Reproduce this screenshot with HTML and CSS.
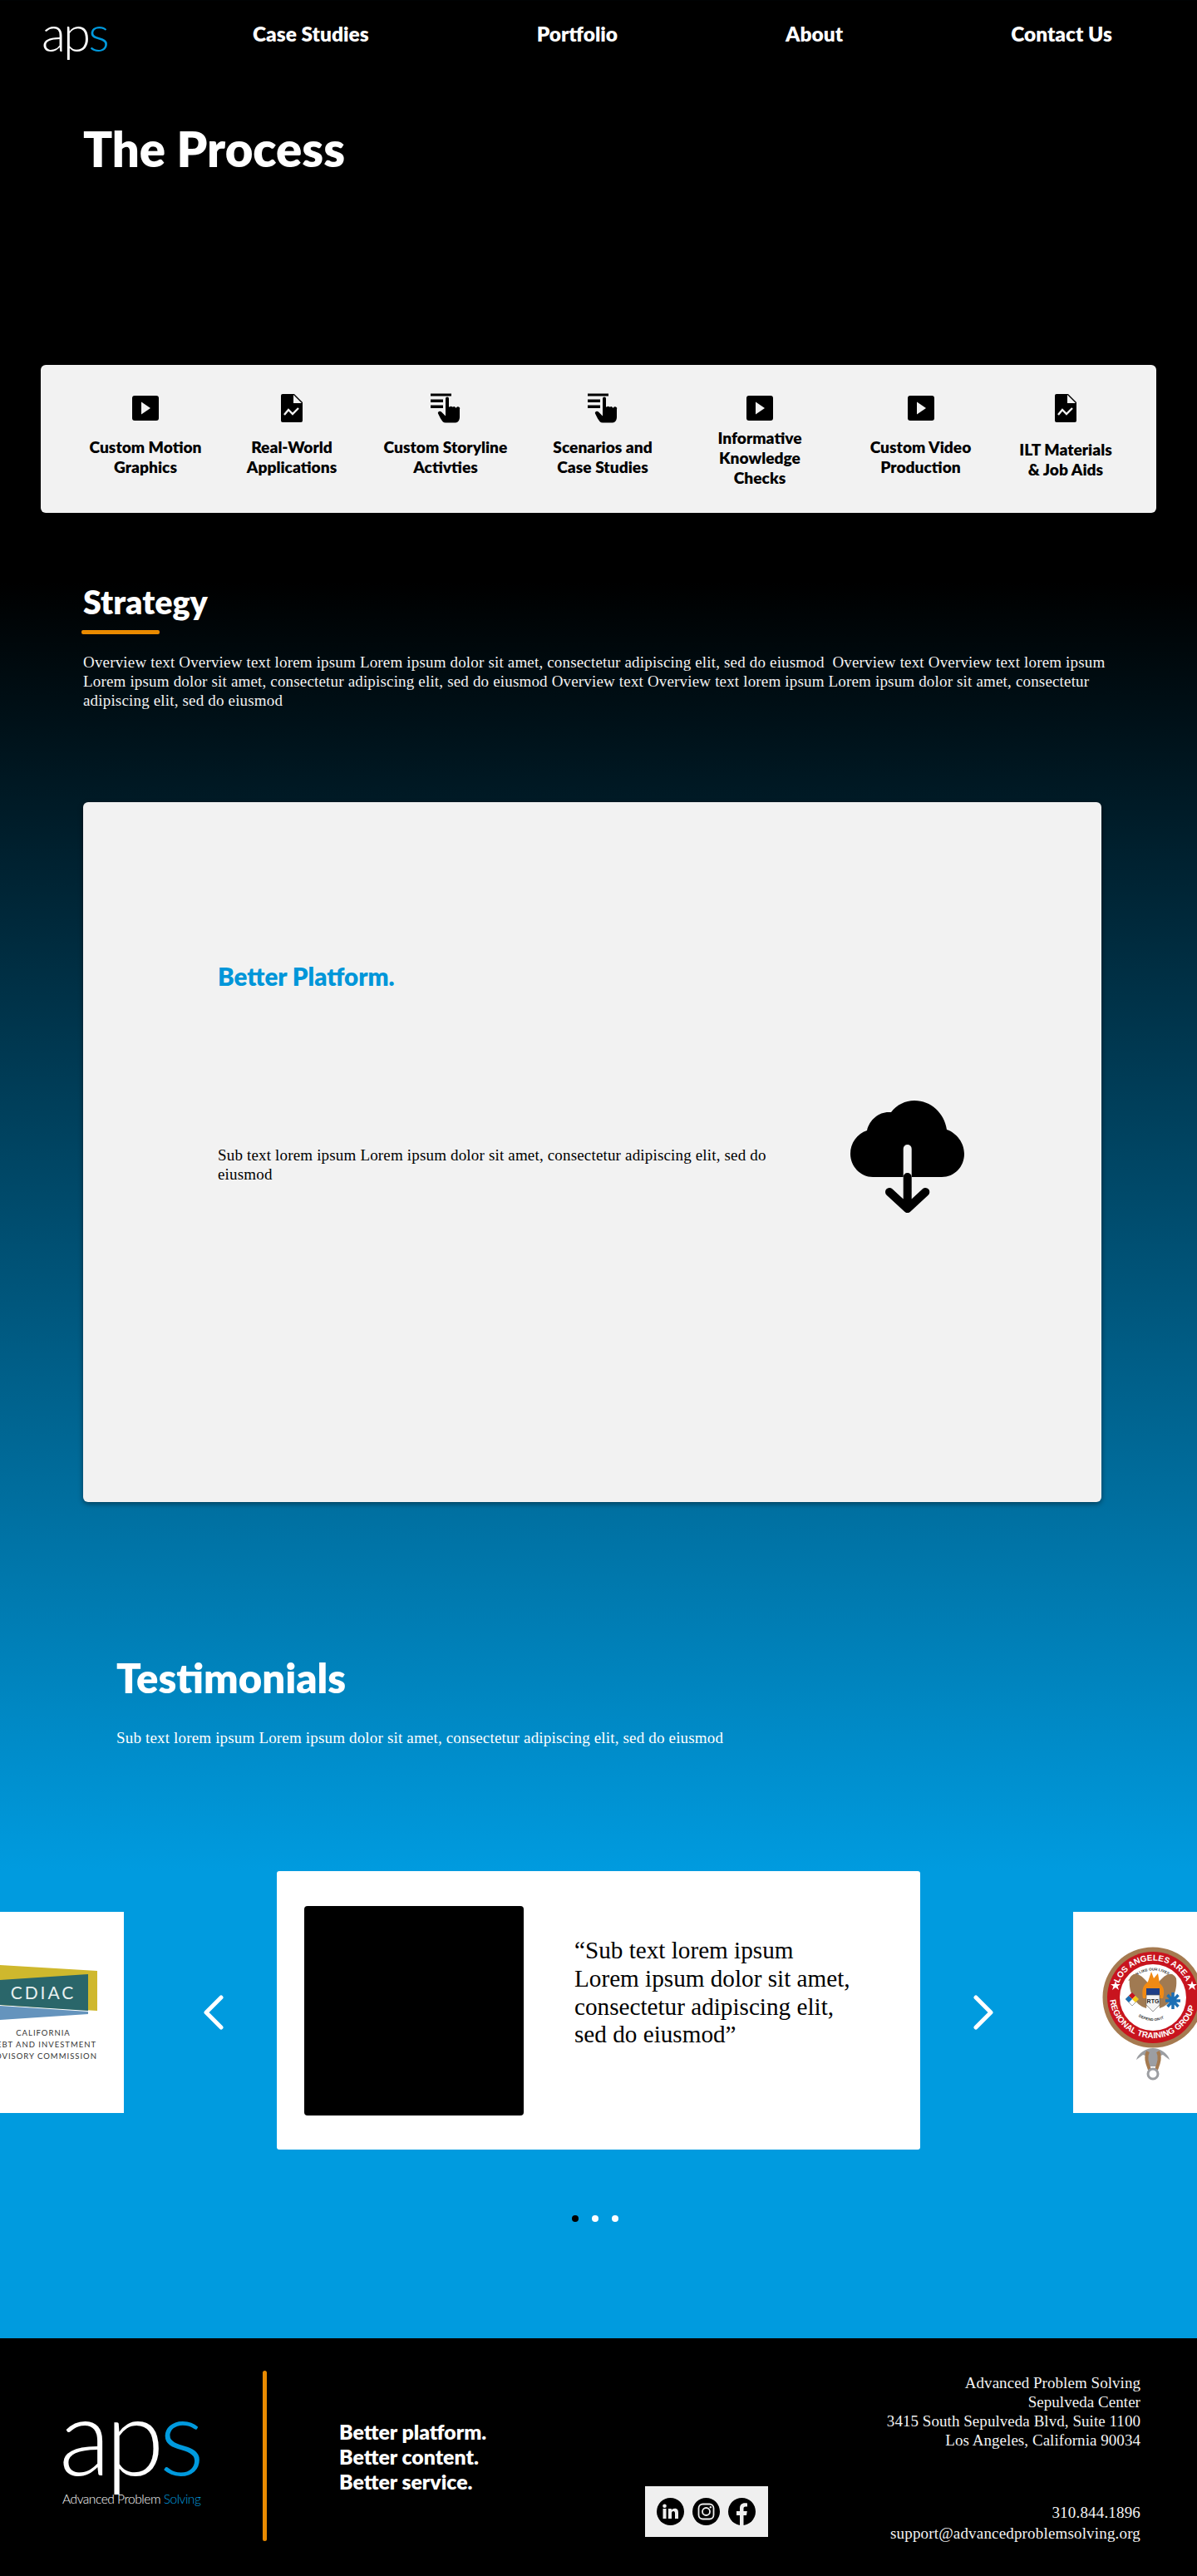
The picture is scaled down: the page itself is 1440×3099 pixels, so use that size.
FILE: index.html
```html
<!DOCTYPE html>
<html lang="en">
<head>
<meta charset="utf-8">
<title>The Process</title>
<link rel="stylesheet" href="styles.css">
</head>
<body>
<header class="nav">
  <a class="logo logo-small" href="#">ap<span class="blue">s</span></a>
  <nav class="nav-links">
    <a href="#">Case Studies</a>
    <a href="#">Portfolio</a>
    <a href="#">About</a>
    <a href="#">Contact Us</a>
  </nav>
</header>
<main>
  <h1 class="page-title">The Process</h1>

  <section class="process">
    <div class="step">
      <svg class="ico" width="32" height="30" viewBox="0 0 32 30"><rect width="32" height="30" rx="3" fill="#000"/><path d="M11 7.5 22 15 11 22.500Z" fill="#f2f2f2"/></svg>
      <p class="step-label">Custom Motion<br>Graphics</p>
    </div>
    <div class="step">
      <svg class="ico" width="26" height="34" viewBox="0 0 26 34"><path d="M2 0H16L26 10V32A2 2 0 0 1 24 34H2A2 2 0 0 1 0 32V2A2 2 0 0 1 2 0Z" fill="#000"/><path d="M15 1V11H25Z" fill="#f2f2f2"/><path d="M4 25 9 19 14 24 21 17" fill="none" stroke="#f2f2f2" stroke-width="2.400"/></svg>
      <p class="step-label">Real-World<br>Applications</p>
    </div>
    <div class="step">
      <svg class="ico" width="36" height="35" viewBox="0 0 36 35"><path d="M0 0H25V3H0ZM0 7H15V10.500H0ZM0 14H15V17.500H0Z" fill="#000"/><path d="M18 6a2 2 0 0 1 4 0V16h1a2 2 0 0 1 3 0h1a2 2 0 0 1 3 1h1a2 2 0 0 1 4 2V28c0 4-2 7-5 7H18c-3 0-4-2-6-5l-3-6c-1-2 2-4 4-2l5 5Z" fill="#000"/></svg>
      <p class="step-label">Custom Storyline<br>Activties</p>
    </div>
    <div class="step">
      <svg class="ico" width="36" height="35" viewBox="0 0 36 35"><path d="M0 0H25V3H0ZM0 7H15V10.500H0ZM0 14H15V17.500H0Z" fill="#000"/><path d="M18 6a2 2 0 0 1 4 0V16h1a2 2 0 0 1 3 0h1a2 2 0 0 1 3 1h1a2 2 0 0 1 4 2V28c0 4-2 7-5 7H18c-3 0-4-2-6-5l-3-6c-1-2 2-4 4-2l5 5Z" fill="#000"/></svg>
      <p class="step-label">Scenarios and<br>Case Studies</p>
    </div>
    <div class="step">
      <svg class="ico" width="32" height="30" viewBox="0 0 32 30"><rect width="32" height="30" rx="3" fill="#000"/><path d="M11 7.500 22 15 11 22.500Z" fill="#f2f2f2"/></svg>
      <p class="step-label step-low">Informative<br>Knowledge<br>Checks</p>
    </div>
    <div class="step">
      <svg class="ico" width="32" height="30" viewBox="0 0 32 30"><rect width="32" height="30" rx="3" fill="#000"/><path d="M11 7.500 22 15 11 22.500Z" fill="#f2f2f2"/></svg>
      <p class="step-label">Custom Video<br>Production</p>
    </div>
    <div class="step">
      <svg class="ico" width="26" height="34" viewBox="0 0 26 34"><path d="M2 0H16L26 10V32A2 2 0 0 1 24 34H2A2 2 0 0 1 0 32V2A2 2 0 0 1 2 0Z" fill="#000"/><path d="M15 1V11H25Z" fill="#f2f2f2"/><path d="M4 25 9 19 14 24 21 17" fill="none" stroke="#f2f2f2" stroke-width="2.400"/></svg>
      <p class="step-label step-lower">ILT Materials<br>&amp; Job Aids</p>
    </div>
  </section>

  <section class="strategy">
    <h2 class="strategy-title">Strategy</h2>
    <div class="rule"></div>
    <p class="overview">Overview text Overview text lorem ipsum Lorem ipsum dolor sit amet, consectetur adipiscing elit, sed do eiusmod&nbsp; Overview text Overview text lorem ipsum Lorem ipsum dolor sit amet, consectetur adipiscing elit, sed do eiusmod Overview text Overview text lorem ipsum Lorem ipsum dolor sit amet, consectetur adipiscing elit, sed do eiusmod</p>
  </section>

  <section class="platform">
    <h3 class="platform-title">Better Platform.</h3>
    <div class="platform-row">
      <p class="platform-text">Sub text lorem ipsum Lorem ipsum dolor sit amet, consectetur adipiscing elit, sed do eiusmod</p>
      <svg class="cloud" width="137" height="135" viewBox="0 0 137 135">
        <path d="M27 92C12 92 0 79 0 64 0 51 8 40 20 36 23 23 34 14 46 14H49C56 5 66 0 77 0 97 0 113 15 116 35 128 39 137 51 137 64 137 80 125 92 110 92Z" fill="#000"/>
        <path d="M68.700 58V92" stroke="#f2f2f2" stroke-width="10" stroke-linecap="round"/>
        <path d="M68.700 92V130M47 110 68.700 130 90.300 110" fill="none" stroke="#000" stroke-width="10" stroke-linecap="round" stroke-linejoin="round"/>
      </svg>
    </div>
  </section>

  <section class="testimonials">
    <h2 class="testimonials-title">Testimonials</h2>
    <p class="testimonials-sub">Sub text lorem ipsum Lorem ipsum dolor sit amet, consectetur adipiscing elit, sed do eiusmod</p>
  </section>

  <section class="carousel">
    <div class="side-card">
      <svg width="149" height="242" viewBox="0 0 149 242">
        <svg x="0" y="0" width="117" height="242" viewBox="0 0 117 242">
          <path d="M0 64 117 71V119L0 112Z" fill="#cfb82d"/>
          <path d="M0 113 106 120V123L0 130Z" fill="#6594bd"/>
          <path d="M0 82 106 75V119L0 112Z" fill="#2a666a"/>
          <text class="cdiac-mark" x="52" y="105" text-anchor="middle">CDIAC</text>
          <text class="cdiac-line" x="52" y="149" text-anchor="middle">CALIFORNIA</text>
          <text class="cdiac-line" x="52" y="163" text-anchor="middle">DEBT AND INVESTMENT</text>
          <text class="cdiac-line" x="52" y="177" text-anchor="middle">ADVISORY COMMISSION</text>
        </svg>
      </svg>
    </div>
    <svg class="arrow arrow-left" width="26" height="42" viewBox="0 0 26 42"><path d="M22 3 4 21 22 39" fill="none" stroke="#fff" stroke-width="5" stroke-linecap="round" stroke-linejoin="round"/></svg>
    <article class="quote-card">
      <div class="quote-photo"></div>
      <p class="quote-text">“Sub text lorem ipsum<br>Lorem ipsum dolor sit amet,<br>consectetur adipiscing elit,<br>sed do eiusmod”</p>
    </article>
    <svg class="arrow arrow-right" width="26" height="42" viewBox="0 0 26 42"><path d="M4 3 22 21 4 39" fill="none" stroke="#fff" stroke-width="5" stroke-linecap="round" stroke-linejoin="round"/></svg>
    <div class="side-card">
      <svg width="149" height="242" viewBox="0 0 149 242">
        <defs>
          <path id="arcTop" d="M54.200 87.800A44.500 44.500 0 0 1 137.800 87.800"/>
          <path id="arcBottom" d="M44 100A52 52 0 1 0 148 100"/>
          <path id="arcInner" d="M68 86A33 33 0 0 1 124 86"/>
          <path id="arcInnerLow" d="M74 122A31 31 0 0 0 118 122"/>
        </defs>
        <circle cx="96" cy="103" r="60.500" fill="#a57a50"/>
        <circle cx="96" cy="103" r="55" fill="#c8141e"/>
        <circle cx="96" cy="103" r="40" fill="#fff"/>
        <text class="seal-text"><textPath href="#arcTop" startOffset="2">LOS ANGELES AREA</textPath></text>
        <text class="seal-text"><textPath href="#arcBottom" startOffset="6">REGIONAL TRAINING GROUP</textPath></text>
        <text class="seal-small"><textPath href="#arcInner" startOffset="2">TRAIN LIKE OUR LIVES</textPath></text>
        <text class="seal-small"><textPath href="#arcInnerLow" startOffset="6">DEPEND ON IT</textPath></text>
        <path d="M51 83 52.500 87H57L53.500 89.500 55 94 51 91 47 94 48.500 89.500 45 87H49.500Z" fill="#fff"/>
        <path d="M143 83 144.500 87H149L145.500 89.500 147 94 143 91 139 94 140.500 89.500 137 87H141.500Z" fill="#fff"/>
        <path d="M92 88C80 72 72 72 68 80 66 96 74 112 88 116ZM100 88C112 72 120 72 124 80 126 96 118 112 104 116Z" fill="#a07a52"/>
        <path d="M84 104C82 90 86 88 90 84L94 72 97 80 102 74 104 86C110 90 110 98 108 104Z" fill="#f08a14"/>
        <path d="M88 92H104V100H88Z" fill="#1f3f86"/>
        <path d="M88 100H104V112L96 120 88 112Z" fill="#f4f4f4" stroke="#555" stroke-width=".6"/>
        <text class="seal-rtg" x="96" y="110" text-anchor="middle">RTG</text>
        <path d="M71 97 79 105 71 113 63 105Z" fill="#fff" stroke="#444" stroke-width=".5"/>
        <path d="M71 97 75 101 71 105 67 101Z" fill="#c8141e"/><path d="M63 105 67 101 71 105 67 109Z" fill="#1b6fb5"/><path d="M75 101 79 105 75 109 71 105Z" fill="#f4c814"/>
        <path d="M120 97V117M111 107H129M113.500 100 126.500 114M126.500 100 113.500 114" stroke="#1b6fb5" stroke-width="3.500"/>
        <path d="M76 178C78 170 88 164 96 164 104 164 114 170 116 178L108 172 102 174V186H90V174L84 172Z" fill="#9c9ea2"/>
        <path d="M90 168C86 176 90 184 92 190M102 168C106 176 102 184 100 190" fill="none" stroke="#a57a50" stroke-width="4"/>
        <circle cx="96" cy="195" r="6" fill="none" stroke="#9c9ea2" stroke-width="3"/>
      </svg>
    </div>
  </section>

  <div class="dots">
    <span class="dot dot-active"></span>
    <span class="dot"></span>
    <span class="dot"></span>
  </div>
</main>

<footer class="footer">
  <div class="brand">
    <div class="logo logo-large">ap<span class="blue">s</span></div>
    <div class="brand-name">Advanced Problem <span class="blue">Solving</span></div>
  </div>
  <div class="footer-rule"></div>
  <p class="tagline">Better platform.<br>Better content.<br>Better service.</p>
  <div class="social">
    <svg width="33" height="33" viewBox="0 0 33 33"><circle cx="16.500" cy="16.500" r="16.500" fill="#000"/><path d="M7.500 13H11.500V25H7.500ZM9.500 7.500A2.300 2.300 0 1 1 9.500 12.100 2.300 2.300 0 0 1 9.500 7.500ZM14 13H17.800V14.700C18.500 13.500 20 12.700 21.800 12.700 25 12.700 26 14.800 26 18V25H22V18.800C22 17.200 21.500 16.100 20.100 16.100 18.700 16.100 18 17.200 18 18.800V25H14Z" fill="#efefef"/></svg>
    <svg width="33" height="33" viewBox="0 0 33 33"><circle cx="16.500" cy="16.500" r="16.500" fill="#000"/><rect x="7.500" y="7.500" width="18" height="18" rx="5" fill="none" stroke="#efefef" stroke-width="1.800"/><circle cx="16.500" cy="16.500" r="4.500" fill="none" stroke="#efefef" stroke-width="1.800"/><circle cx="21.800" cy="11.200" r="1.200" fill="#efefef"/></svg>
    <svg width="33" height="33" viewBox="0 0 33 33"><circle cx="16.500" cy="16.500" r="16.500" fill="#000"/><path d="M14 33V21H10V16H14V12.500C14 8.500 16.400 6.300 20 6.300 21.700 6.300 23 6.500 23 6.500V10.500H21C19 10.500 18.500 11.700 18.500 13V16H22.800L22 21H18.500V33Z" fill="#efefef"/></svg>
  </div>
  <div class="contact">
    <p class="contact-address">Advanced Problem Solving<br>Sepulveda Center<br>3415 South Sepulveda Blvd, Suite 1100<br>Los Angeles, California 90034</p>
    <p class="contact-direct">310.844.1896<br>support@advancedproblemsolving.org</p>
  </div>
</footer>
</body>
</html>
```

FILE: styles.css
```css
* { box-sizing: border-box; }

html, body { margin: 0; padding: 0; }

body {
  width: 1440px;
  font-family: "Liberation Serif", serif;
  color: #fff;
  background: linear-gradient(180deg, #000 700px, #009bdf 2250px);
}

a { color: inherit; text-decoration: none; }

p, h1, h2, h3 { margin: 0; }

.blue { color: #009ade; }

.nav {
  display: flex;
  align-items: center;
  height: 80px;
  padding-left: 50px;
}

.logo {
  display: block;
  font-family: "Lato", sans-serif;
  font-weight: 300;
  color: #fff;
}

.logo-small {
  width: 78px;
  font-size: 60px;
  line-height: 80px;
  letter-spacing: -3px;
  margin-top: -2px;
}

.nav-links {
  display: flex;
  gap: 202px;
  margin-left: 176px;
  font-family: "Lato", sans-serif;
  font-weight: 800;
  font-size: 24.500px;
}

.page-title {
  margin: 63px 0 0 100px;
  height: 296px;
  font-family: "Lato", sans-serif;
  font-weight: 800;
  font-size: 58px;
  line-height: 72px;
}

.process {
  display: grid;
  grid-template-columns: 176px 176px 194px 184px 194px 193px 156px;
  width: 1342px;
  height: 178px;
  margin-left: 49px;
  padding: 34px 0 0 38px;
  background: #f2f2f2;
  border-radius: 6px;
  color: #000;
}

.step {
  display: flex;
  flex-direction: column;
  align-items: center;
}

.ico { height: 36px; flex: none; }

.step-label {
  display: flex;
  align-items: center;
  height: 72px;
  margin-top: 5px;
  text-align: center;
  font-family: "Lato", sans-serif;
  font-weight: 800;
  font-size: 19.200px;
  line-height: 24px;
}

.step-low { margin-top: 6px; }

.step-lower { margin-top: 8px; }

.strategy { padding: 83px 0 0 100px; }

.strategy-title {
  font-family: "Lato", sans-serif;
  font-weight: 800;
  font-size: 39.500px;
  line-height: 48px;
}

.rule {
  width: 94px;
  height: 5px;
  margin: 10px 0 0 -2px;
  background: #e98a00;
  border-radius: 2px;
}

.overview {
  width: 1240px;
  margin-top: 22px;
  font-size: 19px;
  line-height: 23px;
  letter-spacing: .17px;
  color: #f2f2f2;
}

.platform {
  width: 1225px;
  height: 842px;
  margin: 111px 0 0 100px;
  padding: 190px 0 0 162px;
  background: #f2f2f2;
  border-radius: 6px;
  box-shadow: 0 2px 6px rgba(0, 0, 0, .45);
  color: #000;
}

.platform-title {
  font-family: "Lato", sans-serif;
  font-weight: 800;
  font-size: 29.500px;
  line-height: 40px;
  color: #0096d9;
}

.platform-row {
  display: flex;
  align-items: flex-start;
  margin-top: 129px;
}

.platform-text {
  width: 670px;
  margin-top: 54px;
  font-size: 19px;
  line-height: 23px;
  letter-spacing: .17px;
}

.cloud { margin-left: 91px; flex: none; }

.testimonials { padding: 181px 0 0 140px; }

.testimonials-title {
  font-family: "Lato", sans-serif;
  font-weight: 800;
  font-size: 49px;
  line-height: 60px;
}

.testimonials-sub {
  margin-top: 31px;
  font-size: 19px;
  line-height: 23px;
  letter-spacing: .17px;
}

.carousel {
  display: flex;
  align-items: center;
  height: 335px;
  margin-top: 149px;
}

.side-card {
  flex: none;
  width: 149px;
  height: 242px;
  margin-top: 5px;
  background: #fff;
}

.side-card svg { display: block; }

.arrow { flex: none; }

.arrow-left { margin: 5px 63px 0 95px; }

.arrow-right { margin: 5px 95px 0 63px; }

.quote-card {
  flex: none;
  display: flex;
  align-items: center;
  width: 774px;
  height: 335px;
  padding-left: 33px;
  background: #fff;
  border-radius: 3px;
  color: #000;
}

.quote-photo {
  flex: none;
  width: 264px;
  height: 252px;
  background: #000;
  border-radius: 4px;
}

.quote-text {
  width: 370px;
  margin: -42px 0 0 61px;
  font-size: 29.200px;
  line-height: 33.700px;
}

.dots {
  display: flex;
  justify-content: center;
  gap: 16px;
  height: 8px;
  margin-top: 79px;
  padding-right: 8px;
}

.dot {
  width: 8px;
  height: 8px;
  border-radius: 50%;
  background: #fff;
}

.dot-active { background: #000; }

.footer {
  display: flex;
  width: 1440px;
  height: 285px;
  margin-top: 140px;
  background: #000;
}

.brand { width: 316px; padding: 57px 0 0 71px; flex: none; }

.logo-large {
  height: 118px;
  font-size: 128px;
  line-height: 118px;
  letter-spacing: -6px;
}

.brand-name {
  margin-top: 8px;
  padding-left: 4px;
  font-family: "Lato", sans-serif;
  font-weight: 300;
  font-size: 15.600px;
  letter-spacing: -0.5px;
  line-height: 20px;
}

.footer-rule {
  flex: none;
  width: 5px;
  height: 205px;
  margin-top: 39px;
  background: #e98a00;
  border-radius: 3px;
}

.tagline {
  flex: none;
  width: 368px;
  margin: 98px 0 0 87px;
  font-family: "Lato", sans-serif;
  font-weight: 800;
  font-size: 24.800px;
  line-height: 30px;
}

.social {
  flex: none;
  display: flex;
  align-items: center;
  gap: 10px;
  width: 148px;
  height: 61px;
  margin: 178px 0 0 0;
  padding-left: 14px;
  background: #efefef;
}

.contact {
  flex: 1;
  padding: 42px 68px 0 0;
  text-align: right;
  font-size: 19px;
  line-height: 23px;
  letter-spacing: .17px;
  color: #f2f2f2;
}

.contact-address { letter-spacing: .05px; }

.contact-direct { margin-top: 63px; line-height: 25px; }

.cdiac-mark { font: 400 21px "Lato", sans-serif; letter-spacing: 3px; fill: #e8f0f0; }

.cdiac-line { font: 400 9.500px "Lato", sans-serif; letter-spacing: 1px; fill: #333; }

.seal-text { font: 700 10px "Liberation Sans", sans-serif; fill: #fff; }

.seal-small { font: 700 4.500px "Liberation Sans", sans-serif; fill: #333; }

.seal-rtg { font: 700 7px "Liberation Sans", sans-serif; fill: #222; }
```
